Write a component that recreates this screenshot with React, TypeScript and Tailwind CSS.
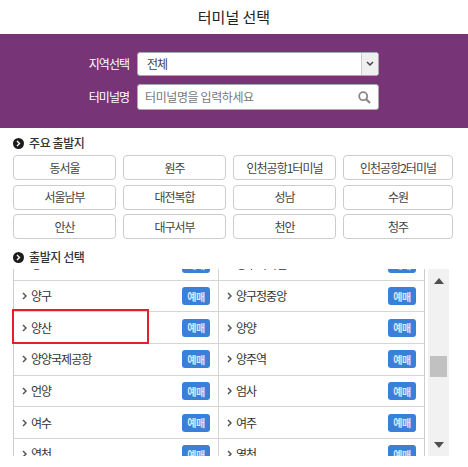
const FONT = "font-['Noto_Sans_CJK_KR','Liberation_Sans',sans-serif]";

const majors = [
  "동서울", "원주", "인천공항1터미널", "인천공항2터미널",
  "서울남부", "대전복합", "성남", "수원",
  "안산", "대구서부", "천안", "청주",
];

const rows = [
  ["양고", "양구터미널"],
  ["양구", "양구정중앙"],
  ["양산", "양양"],
  ["양양국제공항", "양주역"],
  ["언양", "엄사"],
  ["여수", "여주"],
  ["연천", "영천"],
];

function Bullet() {
  return (
    <span className="flex h-[11px] w-[11px] items-center justify-center rounded-full bg-[#1c1c1c]">
      <svg width="5" height="7" viewBox="0 0 5 7" fill="none">
        <path d="M1 1l2.5 2.5L1 6" stroke="#fff" strokeWidth="1.4" />
      </svg>
    </span>
  );
}

function Cell({ name, className }: { name: string; className: string }) {
  return (
    <div className={`flex items-center pl-[8px] pr-[8px] ${className}`}>
      <svg width="5" height="8" viewBox="0 0 5 8" fill="none" className="mr-[4px]">
        <path d="M1 1l3 3-3 3" stroke="#555" strokeWidth="1.5" />
      </svg>
      <span className="flex-1 text-[12px] tracking-[-1px] text-[#333]">{name}</span>
      <span className="flex h-[18px] w-[28px] items-center justify-center rounded-[3px] bg-[#3a80d9] text-[10px] font-bold tracking-[-0.5px] text-[#dbe8f8]">
        예매
      </span>
    </div>
  );
}

function Arrow({ up }: { up?: boolean }) {
  return (
    <svg width="10" height="6" viewBox="0 0 10 6" fill="#505050">
      <path d={up ? "M5 0l5 6H0z" : "M5 6l5-6H0z"} />
    </svg>
  );
}

export default function App() {
  return (
    <div className={`h-[467px] w-[468px] overflow-hidden bg-white ${FONT}`}>
      <h1 className="flex h-[34px] items-center justify-center text-[15px] font-normal text-[#222]">
        터미널 선택
      </h1>

      <div className="flex h-[94px] flex-col items-start gap-[8px] bg-[#773578] pl-[87px] pt-[18px]">
        <div className="flex items-center gap-[8px]">
          <label className="w-[42px] whitespace-nowrap text-right text-[12px] tracking-[-1px] text-white">지역선택</label>
          <div className="flex h-[24px] w-[242px] overflow-hidden rounded-[3px] border border-[#aaa] bg-white">
            <span className="flex-1 pl-[9px] text-[12px] leading-[22px] tracking-[-1px] text-[#444]">전체</span>
            <span className="flex w-[17px] items-center justify-center border-l border-[#ccc] bg-[#efefef]">
              <svg width="8" height="6" viewBox="0 0 8 6" fill="none">
                <path d="M1 1l3 3 3-3" stroke="#444" strokeWidth="1.5" />
              </svg>
            </span>
          </div>
        </div>
        <div className="flex items-center gap-[8px]">
          <label className="w-[42px] whitespace-nowrap text-right text-[12px] tracking-[-1px] text-white">터미널명</label>
          <div className="flex h-[26px] w-[242px] items-center rounded-[3px] border border-[#aaa] bg-white pl-[7px] pr-[7px]">
            <span className="flex-1 text-[12px] tracking-[-0.4px] text-[#777]">터미널명을 입력하세요</span>
            <svg width="13" height="13" viewBox="0 0 13 13" fill="none">
              <circle cx="5.2" cy="5.2" r="4" stroke="#888" strokeWidth="1.8" />
              <path d="M8.2 8.2L12 12" stroke="#888" strokeWidth="2.2" />
            </svg>
          </div>
        </div>
      </div>

      <div className="flex h-[27px] items-center gap-[5px] pl-[13px] pt-[3px]">
        <Bullet />
        <h2 className="text-[12px] font-medium tracking-[-0.4px] text-[#333]">주요 출발지</h2>
      </div>

      <div className="grid grid-cols-[103px_103px_103px_110px] gap-x-[7px] gap-y-[4.5px] pl-[13px]">
        {majors.map((m) => (
          <button
            key={m}
            className="h-[25px] rounded-[4px] border border-[#ccc] bg-white text-[12px] tracking-[-1px] text-[#444]"
          >
            {m}
          </button>
        ))}
      </div>

      <div className="flex h-[30px] items-center gap-[5px] pl-[13px] pt-[6px]">
        <Bullet />
        <h2 className="text-[12px] font-medium tracking-[-0.4px] text-[#333]">출발지 선택</h2>
      </div>

      <div className="flex h-[187px] pl-[13px]">
        <div className="relative w-[412px] border-x border-[#ccc]">
          <div className="h-full overflow-hidden">
            <div className="-mt-[20px]">
              {rows.map((r, i) => (
                <div key={i} className="flex h-[31.7px] border-b border-[#d5d5d5]">
                  <Cell name={r[0]} className="w-[204px]" />
                  <div className="w-px bg-[#d5d5d5]" />
                  <Cell name={r[1]} className="flex-1" />
                </div>
              ))}
            </div>
          </div>
          <div className="absolute left-[-2px] top-[40px] h-[35px] w-[137px] border-2 border-[#e5202a]" />
        </div>
        <div className="ml-[3px] flex w-[21px] flex-col items-center bg-[#f1f1f1] pt-[9px]">
          <Arrow up />
          <div className="mt-[72px] h-[21px] w-[17px] bg-[#c1c1c1]" />
          <div className="mt-[65px]">
            <Arrow />
          </div>
        </div>
      </div>
    </div>
  );
}
